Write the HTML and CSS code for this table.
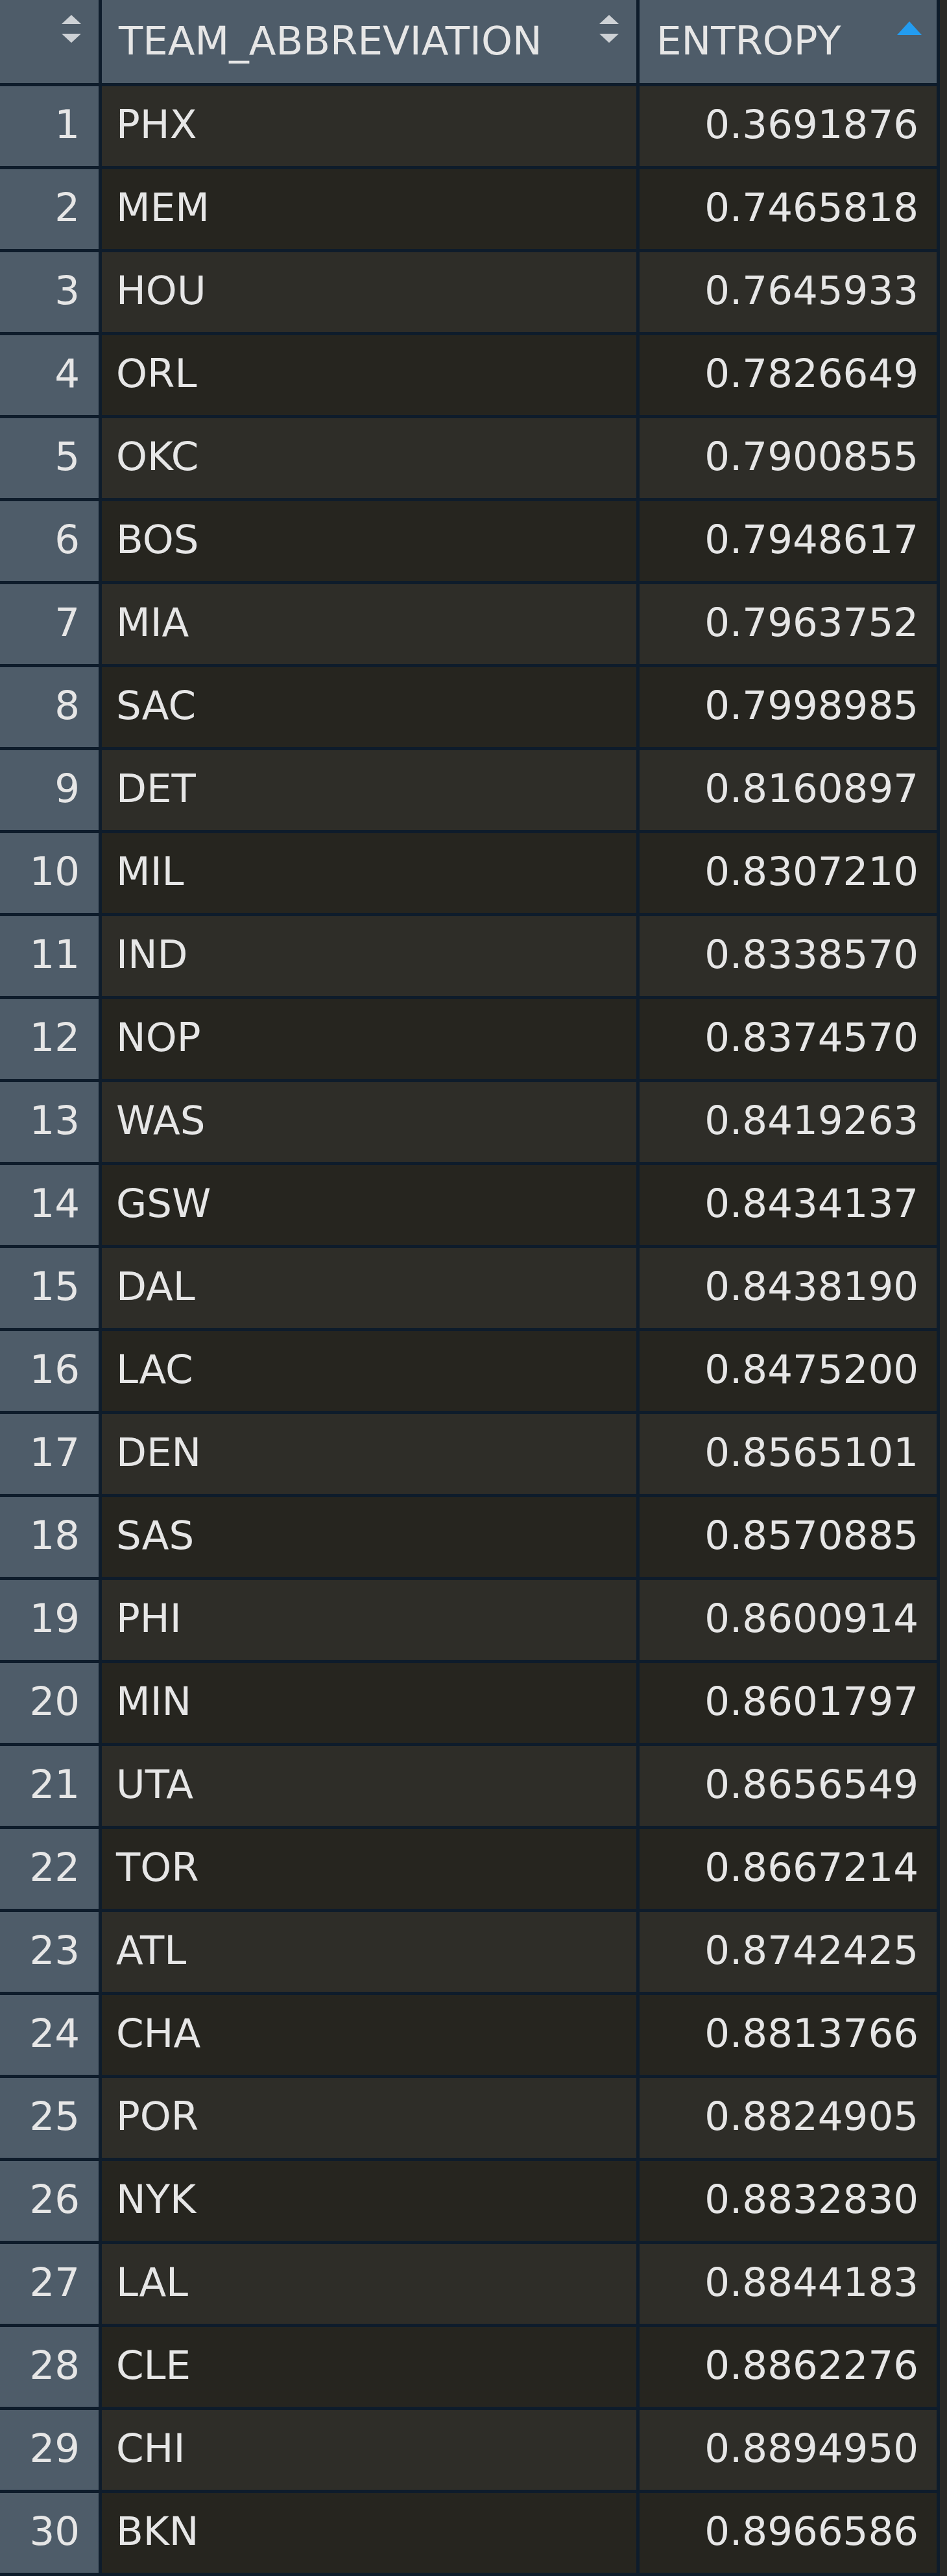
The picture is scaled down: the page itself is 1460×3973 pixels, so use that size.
FILE: index.html
```html
<!DOCTYPE html>
<html lang="en">

<head>
    <meta charset="UTF-8" />
    <meta name="viewport" content="width=device-width, initial-scale=1.0" />
    <title>entropy</title>
    <link rel="stylesheet" href="styles.css">
</head>

<body>
    <div class="viewer">
        <!-- 表头 -->
        <div class="head head-num">
            <svg class="sort" viewBox="0 0 40 46">
                <polygon points="5,15 20,1 35,15" />
                <polygon points="5,30 35,30 20,44" />
            </svg>
        </div>
        <div class="head">
            <span>TEAM_ABBREVIATION</span>
            <svg class="sort" viewBox="0 0 40 46">
                <polygon points="5,15 20,1 35,15" />
                <polygon points="5,30 35,30 20,44" />
            </svg>
        </div>
        <div class="head">
            <span>ENTROPY</span>
            <svg class="sort sort-up" viewBox="0 0 40 24">
                <polygon points="1,22 20,1 39,22" />
            </svg>
        </div>

        <!-- 数据行 -->
        <div class="num">1</div><div class="team odd">PHX</div><div class="val odd">0.3691876</div>
        <div class="num">2</div><div class="team">MEM</div><div class="val">0.7465818</div>
        <div class="num">3</div><div class="team odd">HOU</div><div class="val odd">0.7645933</div>
        <div class="num">4</div><div class="team">ORL</div><div class="val">0.7826649</div>
        <div class="num">5</div><div class="team odd">OKC</div><div class="val odd">0.7900855</div>
        <div class="num">6</div><div class="team">BOS</div><div class="val">0.7948617</div>
        <div class="num">7</div><div class="team odd">MIA</div><div class="val odd">0.7963752</div>
        <div class="num">8</div><div class="team">SAC</div><div class="val">0.7998985</div>
        <div class="num">9</div><div class="team odd">DET</div><div class="val odd">0.8160897</div>
        <div class="num">10</div><div class="team">MIL</div><div class="val">0.8307210</div>
        <div class="num">11</div><div class="team odd">IND</div><div class="val odd">0.8338570</div>
        <div class="num">12</div><div class="team">NOP</div><div class="val">0.8374570</div>
        <div class="num">13</div><div class="team odd">WAS</div><div class="val odd">0.8419263</div>
        <div class="num">14</div><div class="team">GSW</div><div class="val">0.8434137</div>
        <div class="num">15</div><div class="team odd">DAL</div><div class="val odd">0.8438190</div>
        <div class="num">16</div><div class="team">LAC</div><div class="val">0.8475200</div>
        <div class="num">17</div><div class="team odd">DEN</div><div class="val odd">0.8565101</div>
        <div class="num">18</div><div class="team">SAS</div><div class="val">0.8570885</div>
        <div class="num">19</div><div class="team odd">PHI</div><div class="val odd">0.8600914</div>
        <div class="num">20</div><div class="team">MIN</div><div class="val">0.8601797</div>
        <div class="num">21</div><div class="team odd">UTA</div><div class="val odd">0.8656549</div>
        <div class="num">22</div><div class="team">TOR</div><div class="val">0.8667214</div>
        <div class="num">23</div><div class="team odd">ATL</div><div class="val odd">0.8742425</div>
        <div class="num">24</div><div class="team">CHA</div><div class="val">0.8813766</div>
        <div class="num">25</div><div class="team odd">POR</div><div class="val odd">0.8824905</div>
        <div class="num">26</div><div class="team">NYK</div><div class="val">0.8832830</div>
        <div class="num">27</div><div class="team odd">LAL</div><div class="val odd">0.8844183</div>
        <div class="num">28</div><div class="team">CLE</div><div class="val">0.8862276</div>
        <div class="num">29</div><div class="team odd">CHI</div><div class="val odd">0.8894950</div>
        <div class="num">30</div><div class="team">BKN</div><div class="val">0.8966586</div>
    </div>
</body>

</html>
```

FILE: styles.css
```css
* {
    margin: 0;
    padding: 0;
    box-sizing: border-box;
}

body {
    background-color: #2b2a26;
    font-family: "DejaVu Sans", sans-serif;
    font-size: 61px;
    color: #e6e6e6;
}

/* 
    网格：间隙就是边框线
*/
.viewer {
    display: grid;
    grid-template-columns: 152px 824px 458px;
    grid-template-rows: 128px;
    grid-auto-rows: 123px;
    gap: 5px;
    width: fit-content;
    padding: 0 5px 5px 0;
    background-color: #0e1c2b;
}

.viewer > div {
    display: flex;
    align-items: center;
    padding-bottom: 7px;
    white-space: nowrap;
}

.head {
    background-color: #4e5c69;
    justify-content: space-between;
    padding-left: 26px;
    padding-right: 22px;
}

.viewer > .head {
    padding-bottom: 4px;
}

.head-num {
    justify-content: flex-end;
}

.sort {
    width: 40px;
    height: 46px;
    align-self: flex-start;
    margin-top: 22px;
    fill: #cdd1d5;
}

.sort-up {
    height: 24px;
    margin-top: 32px;
    fill: #239cf0;
}

.num {
    background-color: #4e5c69;
    justify-content: flex-end;
    padding-right: 29px;
}

.team,
.val {
    background-color: #26251f;
}

.team {
    padding-left: 22px;
}

.val {
    justify-content: flex-end;
    padding-right: 28px;
}

.odd {
    background-color: #2e2d28;
}
```
